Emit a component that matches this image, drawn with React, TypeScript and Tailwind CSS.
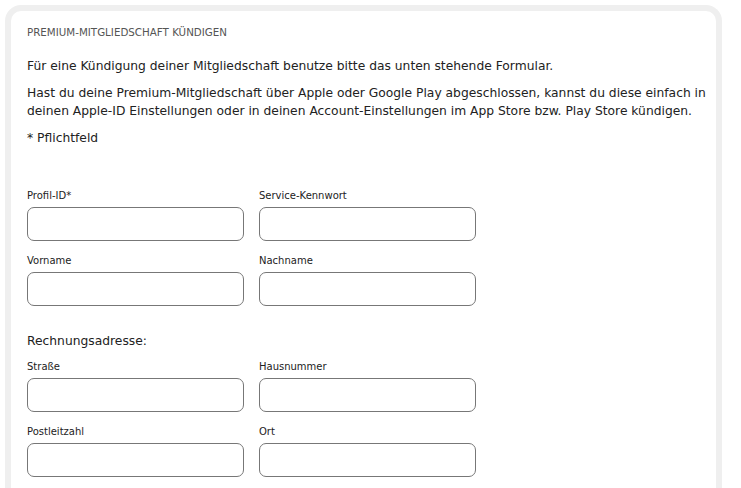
import React from "react";

const font = { fontFamily: '"DejaVu Sans", "Noto Sans", sans-serif' };

function Field({ label }: { label: string }) {
  return (
    <div className="flex flex-col w-[217px]">
      <label className="text-[10px] leading-[14px] text-[#222]">{label}</label>
      <input className="mt-[4px] h-[34px] w-full rounded-[7px] border border-[#777] bg-white outline-none" />
    </div>
  );
}

function Row({ a, b, className = "" }: { a: string; b: string; className?: string }) {
  return (
    <div className={"flex gap-[15px] " + className}>
      <Field label={a} />
      <Field label={b} />
    </div>
  );
}

export default function App() {
  return (
    <div className="w-[741px] h-[488px] overflow-hidden bg-white pt-[5px] pl-[5px]" style={font}>
      <div className="w-[717px] h-[600px] border-[6px] border-b-0 border-[#efefef] rounded-t-[16px] pl-4 pr-2 pt-[14px]">
        <h2 className="text-[10.3px] leading-[14px] text-[#555] uppercase">Premium-Mitgliedschaft kündigen</h2>
        <p className="mt-[18px] text-[12.3px] leading-[18px] text-[#222]">
          Für eine Kündigung deiner Mitgliedschaft benutze bitte das unten stehende Formular.
        </p>
        <p className="mt-[9px] text-[12.3px] leading-[18px] text-[#222]">
          Hast du deine Premium-Mitgliedschaft über Apple oder Google Play abgeschlossen, kannst du diese einfach in deinen Apple-ID Einstellungen oder in deinen Account-Einstellungen im App Store bzw. Play Store kündigen.
        </p>
        <p className="mt-[9px] text-[12.3px] leading-[18px] text-[#222]">* Pflichtfeld</p>
        <Row a="Profil-ID*" b="Service-Kennwort" className="mt-[42px]" />
        <Row a="Vorname" b="Nachname" className="mt-[13px]" />
        <p className="mt-[26px] text-[12.3px] leading-[18px] text-[#222]">Rechnungsadresse:</p>
        <Row a="Straße" b="Hausnummer" className="mt-[10px]" />
        <Row a="Postleitzahl" b="Ort" className="mt-[13px]" />
      </div>
    </div>
  );
}
